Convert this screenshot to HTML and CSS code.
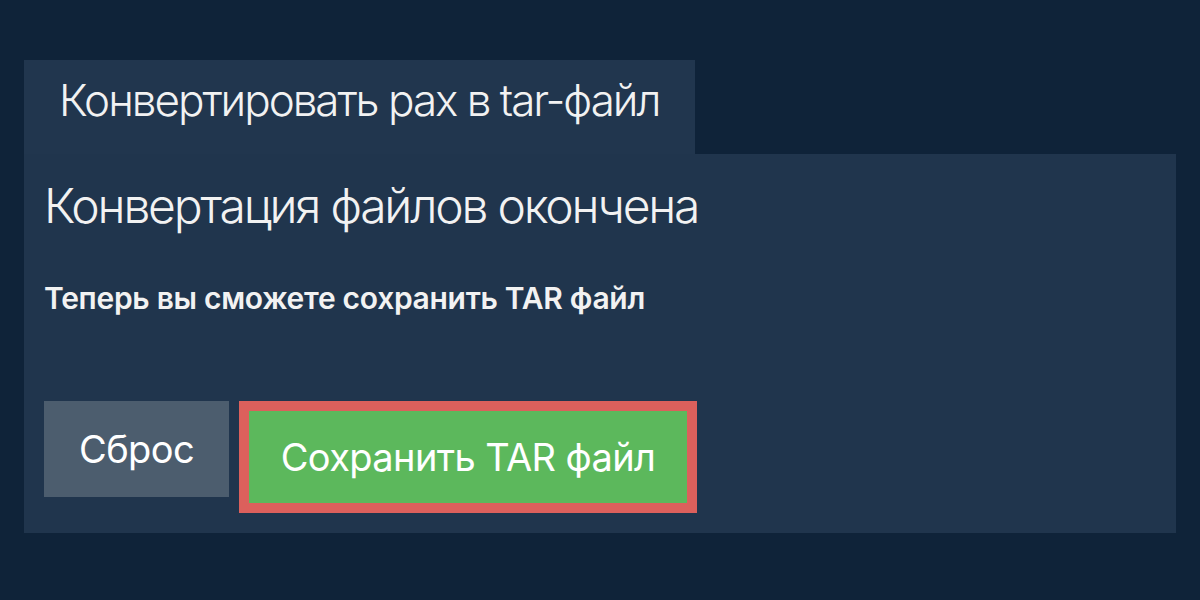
FILE: index.html
```html
<!DOCTYPE html>
<html lang="ru">
<head>
<meta charset="utf-8">
<title>Конвертировать pax в tar-файл</title>
<link rel="stylesheet" href="styles.css">
</head>
<body>
<main class="converter">
  <div class="tab">Конвертировать pax в tar-файл</div>
  <section class="panel">
    <h1 class="panel-title">Конвертация файлов окончена</h1>
    <p class="panel-note">Теперь вы сможете сохранить TAR файл</p>
    <div class="actions">
      <button class="btn btn-reset" type="button">Сброс</button>
      <button class="btn btn-save" type="button">Сохранить TAR файл</button>
    </div>
  </section>
</main>
</body>
</html>
```
FILE: styles.css
```css
* {
  box-sizing: border-box;
}

html, body {
  margin: 0;
  height: 100%;
}

body {
  background: #0f2339;
  font-family: Inter, "Noto Sans", sans-serif;
  color: #f2f2f2;
}

.converter {
  padding: 60px 24px 0;
}

.tab {
  display: inline-block;
  vertical-align: top;
  width: 671px;
  height: 94px;
  padding: 14px 0 0 35px;
  background: #21364e;
  font-size: 44px;
  font-weight: 300;
  line-height: 53px;
  letter-spacing: -2px;
  white-space: nowrap;
}

.panel {
  display: flex;
  flex-direction: column;
  align-items: flex-start;
  height: 379px;
  padding: 23px 20px 20px;
  background: #20354d;
}

.panel-title {
  margin: 0;
  font-size: 48px;
  font-weight: 300;
  line-height: 58px;
  letter-spacing: -2.2px;
}

.panel-note {
  margin: 45px 0 0;
  font-size: 30px;
  font-weight: 600;
  line-height: 36px;
  letter-spacing: -0.3px;
}

.actions {
  display: flex;
  align-items: flex-start;
  gap: 10px;
  margin-top: 85px;
}

.btn {
  display: flex;
  align-items: center;
  justify-content: center;
  margin: 0;
  border: 0;
  border-radius: 0;
  padding: 0;
  color: #ffffff;
  font-family: inherit;
  font-size: 38px;
  font-weight: 400;
  letter-spacing: -0.6px;
  cursor: pointer;
}

.btn-reset {
  width: 185px;
  height: 96px;
  background: #4c5d6e;
}

.btn-save {
  width: 458px;
  height: 112px;
  border: 10px solid #dc605c;
  background: #5cb85c;
}
```
